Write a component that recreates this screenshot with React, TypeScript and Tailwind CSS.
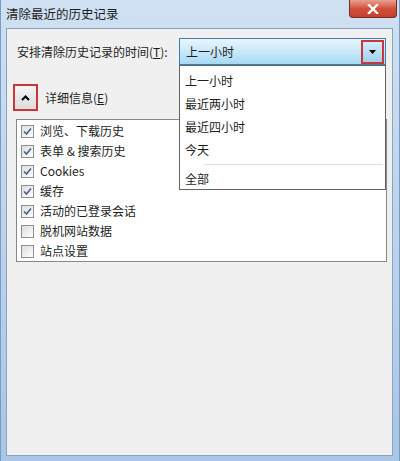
import React from 'react';

const font = { fontFamily: '"Noto Sans CJK SC", "Liberation Sans", sans-serif' };

const items = [
  { label: '浏览、下载历史', checked: true },
  { label: '表单 & 搜索历史', checked: true },
  { label: 'Cookies', checked: true },
  { label: '缓存', checked: true },
  { label: '活动的已登录会话', checked: true },
  { label: '脱机网站数据', checked: false },
  { label: '站点设置', checked: false },
];

const options = ['上一小时', '最近两小时', '最近四小时', '今天'];

function CheckBox({ checked }: { checked: boolean }) {
  return (
    <div className="w-[13px] h-[13px] border border-[#8e8f8f] bg-gradient-to-br from-[#dcdcdc] to-[#ffffff] flex items-center justify-center shrink-0">
      {checked && (
        <svg width="9" height="9" viewBox="0 0 9 9">
          <path d="M1 4.5 L3.5 7 L8 1.5" fill="none" stroke="#4a5f97" strokeWidth="1.6" />
        </svg>
      )}
    </div>
  );
}

export default function App() {
  return (
    <div
      className="w-[400px] h-[461px] flex flex-col bg-gradient-to-b from-[#cfe0f2] via-[#bcd3ec] to-[#a9c6e6] border-l border-r border-[#7a9cc4] overflow-hidden"
      style={font}
    >
      {/* Title bar */}
      <div className="h-[28px] flex justify-between shrink-0">
        <div className="pl-[5px] pt-[5px] text-[12.5px] leading-[18px] text-[#1e1e1e]">清除最近的历史记录</div>
        <div className="w-[48px] h-[18px] mr-[2px] rounded-b-[4px] border border-t-0 border-[#7b2a20] bg-gradient-to-b from-[#e6a08f] via-[#d2513b] to-[#c4402c] flex items-center justify-center">
          <svg width="12" height="10" viewBox="0 0 12 10">
            <path d="M2 1 L10 9 M10 1 L2 9" stroke="#ffffff" strokeWidth="2.4" strokeLinecap="square" />
          </svg>
        </div>
      </div>

      {/* Content */}
      <div className="relative flex-1 ml-[5px] mr-[6px] mb-[5px] border border-[#8da2bb] bg-[#f0f0f0] flex flex-col">
        <div className="flex items-center pt-[9px] pl-[10px]">
          <span className="w-[162px] text-[12px] text-[#1e1e1e]">
            安排清除历史记录的时间(<span className="underline">T</span>):
          </span>
          <div className="w-[207px] h-[27px] border border-[#3c7fb1] bg-gradient-to-b from-[#eaf6fd] via-[#c9e8f8] to-[#a7d9f5] flex items-center justify-between pl-[6px] pr-[1px]">
            <span className="text-[12px] text-[#1e1e1e]">上一小时</span>
            <div className="w-[23px] h-[24px] border-2 border-[#c8373a] bg-gradient-to-b from-[#d5ecfa] to-[#9fd1ef] flex items-center justify-center">
              <svg width="7" height="4" viewBox="0 0 7 4">
                <path d="M0 0 L7 0 L3.5 4 Z" fill="#000" />
              </svg>
            </div>
          </div>
        </div>

        {/* Dropdown list */}
        <div className="absolute left-[172px] top-[36px] w-[207px] h-[125px] bg-white border border-[#646464] pt-[3px] z-10">
          {options.map((o) => (
            <div key={o} className="h-[23px] flex items-center pl-[5px] text-[12px] text-[#1e1e1e]">
              {o}
            </div>
          ))}
          <div className="h-[6px] flex items-center pl-[24px] pr-[2px]">
            <div className="h-px w-full bg-[#e0e0e0]" />
          </div>
          <div className="h-[23px] flex items-center pl-[5px] text-[12px] text-[#1e1e1e]">全部</div>
        </div>

        {/* Details toggle */}
        <div className="flex items-center mt-[19px] ml-[6px]">
          <div className="w-[25px] h-[27px] border-2 border-[#c8373a] bg-gradient-to-b from-[#f4f4f4] to-[#dcdcdc] flex items-center justify-center">
            <svg width="9" height="6" viewBox="0 0 9 6">
              <path d="M1 5 L4.5 1.5 L8 5" fill="none" stroke="#000" strokeWidth="2" />
            </svg>
          </div>
          <span className="ml-[7px] text-[12px] text-[#1e1e1e]">
            详细信息(<span className="underline">E</span>)
          </span>
        </div>

        {/* Checkbox list */}
        <div className="mt-[8px] ml-[9px] w-[371px] h-[143px] bg-white border border-[#828790] pt-[1px]">
          {items.map((it) => (
            <div key={it.label} className="h-[20px] flex items-center pl-[4px] gap-[6px]">
              <CheckBox checked={it.checked} />
              <span className="text-[12px] text-[#1e1e1e]">{it.label}</span>
            </div>
          ))}
        </div>
      </div>
    </div>
  );
}
